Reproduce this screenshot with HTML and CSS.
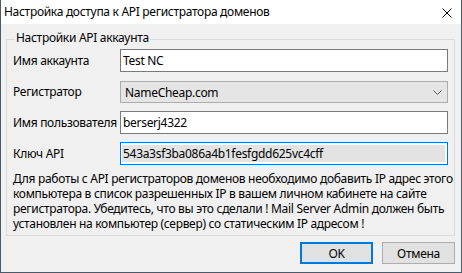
FILE: index.html
```html
<!doctype html>
<html>
  <head>
    <title>Настройка доступа к API регистратора доменов</title>
    <link rel="stylesheet" href="styles.css">
  </head>
  <body>
    <div class="window">
      <div class="titlebar">
        <span class="title">Настройка доступа к API регистратора доменов</span>
        <svg class="close" width="10" height="10" viewBox="0 0 10 10">
          <path d="M0.5 0.5 L9.5 9.5 M9.5 0.5 L0.5 9.5" stroke="#000" stroke-width="1" fill="none" />
        </svg>
      </div>
      <div class="content">
        <div class="group">
          <div class="legend">Настройки API аккаунта</div>
          <div class="fields">
            <label class="label">Имя аккаунта</label>
            <div class="edit">Test NC</div>
            <label class="label">Регистратор</label>
            <div class="combo">
              <span>NameCheap.com</span>
              <svg class="chevron" width="9" height="5" viewBox="0 0 9 5">
                <path d="M0.5 0.5 L4.5 4.5 L8.5 0.5" stroke="#555" stroke-width="1" fill="none" />
              </svg>
            </div>
            <label class="label">Имя пользователя</label>
            <div class="edit">berserj4322</div>
            <label class="label">Ключ API</label>
            <div class="edit edit-focus"><span class="selected">543a3sf3ba086a4b1fesfgdd625vc4cff</span></div>
          </div>
          <p class="note">
            Для работы с API регистраторов доменов необходимо добавить IP адрес этого<br>
            компьютера в список разрешенных IP в вашем личном кабинете на сайте<br>
            регистратора. Убедитесь, что вы это сделали ! Mail Server Admin должен быть<br>
            установлен на компьютер (сервер) со статическим IP адресом !
          </p>
        </div>
        <div class="buttons">
          <button class="btn btn-default">OK</button>
          <button class="btn">Отмена</button>
        </div>
      </div>
    </div>
  </body>
</html>
```

FILE: styles.css
```css
body {
  margin: 0;
  font-family: "Noto Sans", "Open Sans", sans-serif;
  font-size: 12px;
  letter-spacing: -0.3px;
  color: #000;
}
.window {
  width: 462px;
  height: 273px;
  box-sizing: border-box;
  border: 1px solid #4b5a6a;
  border-top: none;
  background: #f0f0f0;
  display: flex;
  flex-direction: column;
}
.titlebar {
  height: 24px;
  background: #fff;
  display: flex;
  align-items: center;
  padding-left: 3px;
  padding-right: 9px;
}
.title {
  flex: 1;
  line-height: 15px;
  margin-top: -1px;
}
.close {
  display: block;
  margin-top: 2px;
}
.content {
  padding: 15px 6px 8px 5px;
}
.group {
  border: 1px solid #dcdcdc;
  padding: 0 6px 4px 6px;
}
.legend {
  width: fit-content;
  margin: -10px 0 0 2px;
  padding: 0 1px;
  background: #f0f0f0;
  line-height: 15px;
}
.fields {
  display: grid;
  grid-template-columns: 107px 1fr;
  grid-auto-rows: 23px;
  row-gap: 8px;
  margin-top: 4px;
}
.label {
  align-self: center;
  white-space: nowrap;
}
.edit {
  box-sizing: border-box;
  height: 23px;
  border: 1px solid #7a7a7a;
  background: #fff;
  padding: 0 2px;
  line-height: 21px;
  white-space: nowrap;
  overflow: hidden;
}
.edit-focus {
  border-color: #0078d7;
  padding: 2px 2px;
  line-height: 17px;
}
.selected {
  display: block;
  background: #e3e3e3;
  padding-left: 1px;
  margin-left: -1px;
}
.combo {
  box-sizing: border-box;
  height: 22px;
  margin-top: 1px;
  border: 1px solid #adadad;
  background: #e5e5e5;
  display: flex;
  align-items: center;
  padding: 0 5px 0 4px;
}
.combo span {
  flex: 1;
}
.chevron {
  display: block;
}
.note {
  margin: 6px 0 0 0;
  line-height: 15px;
  white-space: nowrap;
}
.buttons {
  display: flex;
  justify-content: flex-end;
  gap: 9px;
  margin-top: 6px;
}
.btn {
  box-sizing: border-box;
  width: 73px;
  height: 22px;
  border: 1px solid #adadad;
  background: #e1e1e1;
  font-family: inherit;
  font-size: 12px;
  letter-spacing: inherit;
  color: #000;
  padding: 0;
}
.btn-default {
  border: 2px solid #0078d7;
}
```
